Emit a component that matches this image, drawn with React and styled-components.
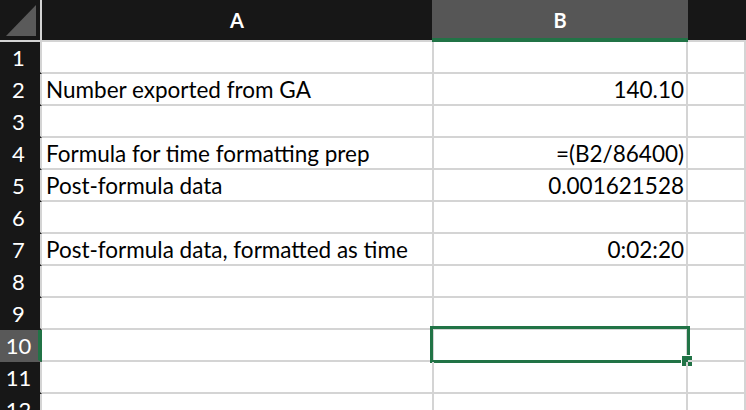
import React from "react";
import styled, { createGlobalStyle } from "styled-components";

const GREEN = "#217346";
const GRID = "#d4d4d4";
const DARK = "#171717";

const GlobalStyle = createGlobalStyle`
  html, body {
    margin: 0;
    padding: 0;
    width: 746px;
    height: 410px;
    overflow: hidden;
    background: #ffffff;
  }
  body {
    font-family: Lato, "Liberation Sans", sans-serif;
  }
`;

const Sheet = styled.div`
  width: 746px;
  height: 410px;
  overflow: hidden;
  display: flex;
  flex-direction: column;
`;

const HeaderRow = styled.div`
  flex: none;
  display: grid;
  grid-template-columns: 42px 390px 256px 1fr;
  height: 42px;
  position: relative;
  z-index: 1;
`;

const HeaderCell = styled.div`
  box-sizing: border-box;
  background: ${(p) => (p.$active ? "#565656" : DARK)};
  border-bottom: ${(p) => (p.$active ? `4px solid ${GREEN}` : `2px solid ${GRID}`)};
  color: #ffffff;
  font-size: 20px;
  font-weight: 700;
  display: flex;
  align-items: center;
  justify-content: center;
  padding-top: ${(p) => (p.$active ? "2px" : "0")};
`;

const Corner = styled(HeaderCell)`
  border-right: 2px solid ${GRID};
  align-items: stretch;
  justify-content: stretch;
`;

const CornerMark = styled.svg`
  display: block;
  width: 40px;
  height: 40px;
`;

const Body = styled.div`
  display: grid;
  grid-template-columns: 42px 392px 254px 1fr;
  grid-auto-rows: 32px;
`;

const RowHead = styled.div`
  box-sizing: border-box;
  background: ${(p) => (p.$active ? "#595959" : DARK)};
  border-right: ${(p) => (p.$active ? `4px solid ${GREEN}` : `2px solid ${GRID}`)};
  border-bottom: 2px solid ${(p) => (p.$active ? "#595959" : DARK)};
  color: #ffffff;
  font-size: 22px;
  display: flex;
  align-items: center;
  justify-content: center;
  padding: 0 ${(p) => (p.$active ? "1px" : "3px")} 0 0;
`;

const Cell = styled.div`
  box-sizing: border-box;
  position: relative;
  border-right: 2px solid ${GRID};
  border-bottom: 2px solid ${GRID};
  display: flex;
  align-items: center;
  justify-content: ${(p) => (p.$right ? "flex-end" : "flex-start")};
  padding: 1px 2px 0 4px;
  font-size: 22.5px;
  color: #000000;
  white-space: nowrap;
`;

const Selection = styled.div`
  position: absolute;
  top: -4px;
  left: -4px;
  right: -4px;
  bottom: -3px;
  border: 3px solid ${GREEN};
  pointer-events: none;
`;

const FillHandle = styled.div`
  position: absolute;
  right: -6px;
  bottom: -7px;
  width: 12px;
  height: 12px;
  box-sizing: border-box;
  background: ${GREEN};
  border: 1px solid #ffffff;
`;

const rows = [
  ["", ""],
  ["Number exported from GA", "140.10"],
  ["", ""],
  ["Formula for time formatting prep", "=(B2/86400)"],
  ["Post-formula data", "0.001621528"],
  ["", ""],
  ["Post-formula data, formatted as time", "0:02:20"],
  ["", ""],
  ["", ""],
  ["", ""],
  ["", ""],
  ["", ""],
];

const ACTIVE_ROW = 10;

export default function App() {
  return (
    <>
      <GlobalStyle />
      <Sheet>
        <HeaderRow>
          <Corner>
            <CornerMark viewBox="0 0 40 40">
              <polygon points="6,36 36,36 36,5" fill="#5a5a5a" />
            </CornerMark>
          </Corner>
          <HeaderCell>A</HeaderCell>
          <HeaderCell $active>B</HeaderCell>
          <HeaderCell />
        </HeaderRow>
        <Body>
          {rows.map(([a, b], i) => {
            const n = i + 1;
            const active = n === ACTIVE_ROW;
            return (
              <React.Fragment key={n}>
                <RowHead $active={active}>{n}</RowHead>
                <Cell>{a}</Cell>
                <Cell $right>
                  {b}
                  {active && (
                    <Selection>
                      <FillHandle />
                    </Selection>
                  )}
                </Cell>
                <Cell />
              </React.Fragment>
            );
          })}
        </Body>
      </Sheet>
    </>
  );
}
